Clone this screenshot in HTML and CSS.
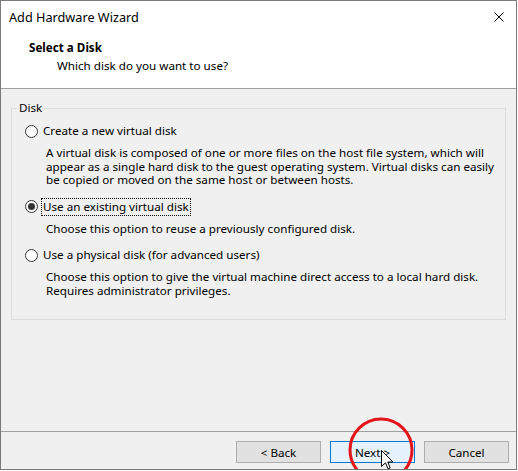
FILE: index.html
```html
<!DOCTYPE html>
<html lang="en">
<head>
    <meta charset="UTF-8">
    <meta name="viewport" content="width=device-width, initial-scale=1.0">
    <title>Add Hardware Wizard</title>
    <link rel="stylesheet" href="styles.css">
</head>
<body>
    <div class="window">
        <div class="titlebar">
            <span class="title">Add Hardware Wizard</span>
            <svg class="close" width="10" height="10" viewBox="0 0 10 10">
                <path d="M0.5 0.5 L9.5 9.5 M9.5 0.5 L0.5 9.5" stroke="#000" stroke-width="1" fill="none"/>
            </svg>
        </div>

        <div class="header">
            <h1>Select a Disk</h1>
            <p>Which disk do you want to use?</p>
        </div>

        <div class="content">
            <fieldset class="group">
                <legend>Disk</legend>

                <div class="option">
                    <label class="radio"><span class="circle"></span><span class="text">Create a new virtual disk</span></label>
                    <p class="desc">A virtual disk is composed of one or more files on the host file system, which will<br>appear as a single hard disk to the guest operating system. Virtual disks can easily<br>be copied or moved on the same host or between hosts.</p>
                </div>

                <div class="option">
                    <label class="radio checked"><span class="circle"></span><span class="text focus">Use an existing virtual disk</span></label>
                    <p class="desc">Choose this option to reuse a previously configured disk.</p>
                </div>

                <div class="option">
                    <label class="radio"><span class="circle"></span><span class="text">Use a physical disk (for advanced users)</span></label>
                    <p class="desc">Choose this option to give the virtual machine direct access to a local hard disk.<br>Requires administrator privileges.</p>
                </div>
            </fieldset>
        </div>

        <div class="footer">
            <button class="btn">&lt; Back</button>
            <button class="btn default">Next &gt;</button>
            <button class="btn">Cancel</button>
        </div>

        <!-- markup drawn on top of the screenshot -->
        <svg class="mark" width="80" height="60" viewBox="0 0 80 60">
            <circle cx="40" cy="40" r="31" stroke="#e4141b" stroke-width="3" fill="none"/>
        </svg>
        <svg class="cursor" width="13" height="20" viewBox="0 0 13 20">
            <path d="M0.5 0.5 L0.5 16.5 L4.5 12.8 L7 18.8 L9.2 17.9 L6.8 12 L12 12 Z" fill="#fff" stroke="#000" stroke-width="1" stroke-linejoin="miter"/>
        </svg>
    </div>
</body>
</html>
```

FILE: styles.css
```css
body {
    margin: 0;
    background-color: #ffffff;
    font-family: "Noto Sans", sans-serif;
    font-size: 11.65px;
    color: #000;
}
.window {
    position: relative;
    width: 517px;
    height: 470px;
    box-sizing: border-box;
    border: 1px solid #7a7a7a;
    background-color: #f0f0f0;
    display: flex;
    flex-direction: column;
    overflow: hidden;
}
.titlebar {
    height: 31px;
    box-sizing: border-box;
    background-color: #fff;
    display: flex;
    align-items: center;
    justify-content: space-between;
    padding: 1px 12px 0 8px;
    line-height: 16px;
    font-size: 12.7px;
}
.close {
    display: block;
}
.header {
    background-color: #fff;
    border-bottom: 1px solid #a0a0a0;
    padding: 8px 0 14px;
    height: 34px;
}
.header h1 {
    margin: 0 0 2px 28px;
    font-size: 11.65px;
    font-weight: bold;
    line-height: 16px;
}
.header p {
    margin: 0 0 0 56px;
    line-height: 16px;
}

.content {
    flex: 1;
    padding: 12px 10px 0;
}
.group {
    margin: 0;
    padding: 8px 12px 22px 13px;
    border: 1px solid #dcdcdc;
    border-radius: 0;
    min-width: 0;
}
.group legend {
    padding: 0 2px;
    margin-left: -8px;
    line-height: 14px;
}
.option + .option {
    margin-top: 12px;
}
.radio {
    display: flex;
    align-items: center;
    height: 16px;
    line-height: 16px;
}
.circle {
    width: 11px;
    height: 11px;
    border: 1px solid #333;
    border-radius: 50%;
    background-color: #fff;
    margin-right: 3px;
    display: flex;
    align-items: center;
    justify-content: center;
}
.checked .circle::after {
    content: "";
    width: 7px;
    height: 7px;
    border-radius: 50%;
    background-color: #333;
}
.text {
    padding: 0 1px;
    border: 1px dotted transparent;
}
.focus {
    border-color: #000;
}
.desc {
    margin: 7px 0 0 21px;
    line-height: 13.5px;
    white-space: nowrap;
}

.footer {
    height: 38px;
    border-top: 1px solid #a0a0a0;
    display: flex;
    justify-content: flex-end;
    gap: 9px;
    padding: 9px 7px 0 0;
    box-sizing: border-box;
}
.btn {
    width: 85px;
    height: 22px;
    border: 1px solid #adadad;
    background-color: #e1e1e1;
    font-family: "Noto Sans", sans-serif;
    font-size: 11.65px;
    color: #000;
    padding: 0;
}
.btn.default {
    border-color: #0078d7;
    background-color: #e5f1fb;
}

.mark {
    position: absolute;
    left: 340px;
    top: 409px;
}
.cursor {
    position: absolute;
    left: 380px;
    top: 449px;
}
```
